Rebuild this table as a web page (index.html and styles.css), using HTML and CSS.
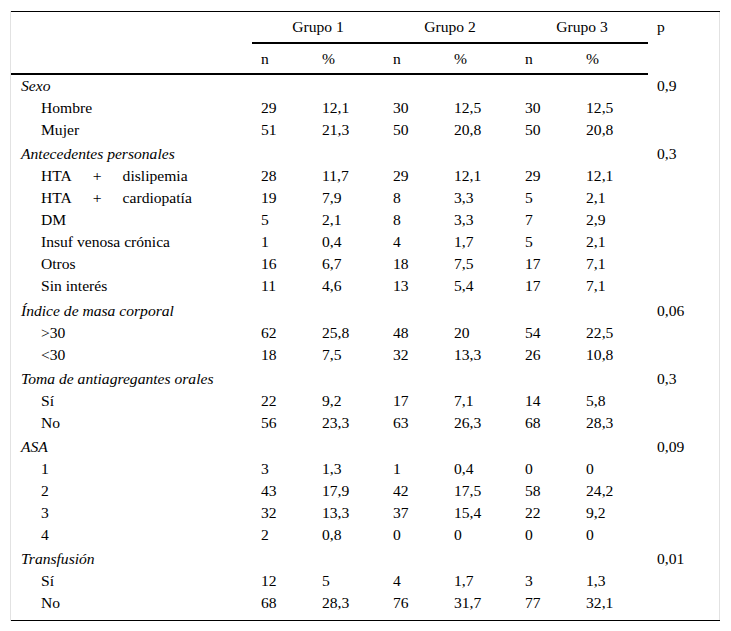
FILE: index.html
```html
<!DOCTYPE html>
<html lang="es">
<head>
<meta charset="utf-8">
<title>Tabla</title>
<link rel="stylesheet" href="styles.css">
</head>
<body>
<div class="frame">
<table class="data">
<colgroup>
<col class="c-label"><col class="c-n"><col class="c-p"><col class="c-n"><col class="c-p"><col class="c-n"><col class="c-p"><col class="c-pv">
</colgroup>
<thead>
<tr class="h1">
<th></th>
<th colspan="2" class="grp">Grupo 1</th>
<th colspan="2" class="grp">Grupo 2</th>
<th colspan="2" class="grp">Grupo 3</th>
<th class="pv" rowspan="2">p</th>
</tr>
<tr class="h2">
<th></th>
<th>n</th><th>%</th><th>n</th><th>%</th><th>n</th><th>%</th>
</tr>
</thead>
<tbody>
<tr class="cat first"><td><i>Sexo</i></td><td></td><td></td><td></td><td></td><td></td><td></td><td>0,9</td></tr>
<tr><td class="sub">Hombre</td><td>29</td><td>12,1</td><td>30</td><td>12,5</td><td>30</td><td>12,5</td><td></td></tr>
<tr><td class="sub">Mujer</td><td>51</td><td>21,3</td><td>50</td><td>20,8</td><td>50</td><td>20,8</td><td></td></tr>
<tr class="cat"><td><i>Antecedentes personales</i></td><td></td><td></td><td></td><td></td><td></td><td></td><td>0,3</td></tr>
<tr><td class="sub">HTA<span class="plus">+</span>dislipemia</td><td>28</td><td>11,7</td><td>29</td><td>12,1</td><td>29</td><td>12,1</td><td></td></tr>
<tr><td class="sub">HTA<span class="plus">+</span>cardiopatía</td><td>19</td><td>7,9</td><td>8</td><td>3,3</td><td>5</td><td>2,1</td><td></td></tr>
<tr><td class="sub">DM</td><td>5</td><td>2,1</td><td>8</td><td>3,3</td><td>7</td><td>2,9</td><td></td></tr>
<tr><td class="sub">Insuf venosa crónica</td><td>1</td><td>0,4</td><td>4</td><td>1,7</td><td>5</td><td>2,1</td><td></td></tr>
<tr><td class="sub">Otros</td><td>16</td><td>6,7</td><td>18</td><td>7,5</td><td>17</td><td>7,1</td><td></td></tr>
<tr><td class="sub">Sin interés</td><td>11</td><td>4,6</td><td>13</td><td>5,4</td><td>17</td><td>7,1</td><td></td></tr>
<tr class="cat"><td><i>Índice de masa corporal</i></td><td></td><td></td><td></td><td></td><td></td><td></td><td>0,06</td></tr>
<tr><td class="sub">&gt;30</td><td>62</td><td>25,8</td><td>48</td><td>20</td><td>54</td><td>22,5</td><td></td></tr>
<tr><td class="sub">&lt;30</td><td>18</td><td>7,5</td><td>32</td><td>13,3</td><td>26</td><td>10,8</td><td></td></tr>
<tr class="cat"><td><i>Toma de antiagregantes orales</i></td><td></td><td></td><td></td><td></td><td></td><td></td><td>0,3</td></tr>
<tr><td class="sub">Sí</td><td>22</td><td>9,2</td><td>17</td><td>7,1</td><td>14</td><td>5,8</td><td></td></tr>
<tr><td class="sub">No</td><td>56</td><td>23,3</td><td>63</td><td>26,3</td><td>68</td><td>28,3</td><td></td></tr>
<tr class="cat"><td><i>ASA</i></td><td></td><td></td><td></td><td></td><td></td><td></td><td>0,09</td></tr>
<tr><td class="sub">1</td><td>3</td><td>1,3</td><td>1</td><td>0,4</td><td>0</td><td>0</td><td></td></tr>
<tr><td class="sub">2</td><td>43</td><td>17,9</td><td>42</td><td>17,5</td><td>58</td><td>24,2</td><td></td></tr>
<tr><td class="sub">3</td><td>32</td><td>13,3</td><td>37</td><td>15,4</td><td>22</td><td>9,2</td><td></td></tr>
<tr><td class="sub">4</td><td>2</td><td>0,8</td><td>0</td><td>0</td><td>0</td><td>0</td><td></td></tr>
<tr class="cat"><td><i>Transfusión</i></td><td></td><td></td><td></td><td></td><td></td><td></td><td>0,01</td></tr>
<tr><td class="sub">Sí</td><td>12</td><td>5</td><td>4</td><td>1,7</td><td>3</td><td>1,3</td><td></td></tr>
<tr class="last"><td class="sub">No</td><td>68</td><td>28,3</td><td>76</td><td>31,7</td><td>77</td><td>32,1</td><td></td></tr>
</tbody>
</table>
</div>
</body>
</html>
```
FILE: styles.css
```css
html, body {
  margin: 0;
  padding: 0;
  background: #fff;
}
body {
  font-family: "Liberation Serif", "Times New Roman", serif;
  font-size: 15.6px;
  color: #000;
}
.frame {
  margin: 11px 11px 0 10px;
  border-left: 1px solid #e2e2e2;
  border-right: 1px solid #e2e2e2;
}
.data {
  width: 100%;
  border-collapse: collapse;
  table-layout: fixed;
  border-top: 1px solid #000;
  border-bottom: 1px solid #000;
  font-size: inherit;
}
.c-label { width: 241px; }
.c-n { width: 61px; }
.c-p { width: 71px; }
.c-pv { width: 72px; }
.data th {
  font-weight: normal;
  text-align: left;
  line-height: 16px;
  padding: 7px 0 7px 9px;
  height: 16px;
}
.data .grp {
  text-align: center;
  padding-left: 0;
  border-bottom: 2px solid #000;
}
.data .pv {
  vertical-align: top;
}
.data thead tr.h2 th {
  padding-top: 7px;
  padding-bottom: 6px;
  border-bottom: 2px solid #000;
}
.data td {
  line-height: 16px;
  padding: 3px 0 3px 9px;
  vertical-align: middle;
  white-space: nowrap;
}
.data td:first-child {
  padding-left: 10px;
}
.data td.sub {
  padding-left: 30px;
}
.data tr.cat td {
  padding-top: 5.3px;
}
.data tr.cat.first td {
  padding-top: 3px;
}
.data tr.last td {
  padding-bottom: 9px;
  vertical-align: top;
}
.plus {
  margin: 0 21px;
}
```
